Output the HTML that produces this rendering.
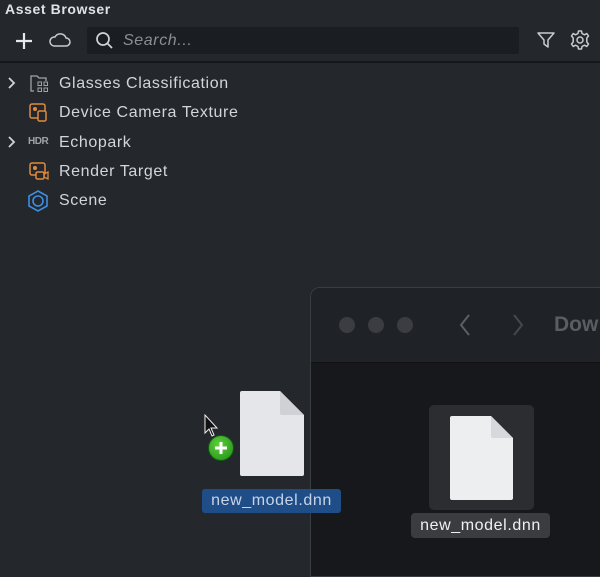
<!DOCTYPE html>
<html><head><style>
*{margin:0;padding:0;box-sizing:border-box}
body{width:600px;height:560px;background:#24282d;font-family:"Liberation Sans",sans-serif;position:relative;overflow:hidden;color:#d2d5da}
.a{position:absolute}
.row{position:absolute;left:59px;font-size:16px;color:#d2d5da;line-height:20px;letter-spacing:0.6px}
.chev{position:absolute;left:6px}
</style></head><body>
<div class="a" style="left:5px;top:1px;font-size:14px;font-weight:bold;color:#e0e2e6;letter-spacing:0.6px">Asset Browser</div>
<svg class="a" style="left:14px;top:31px" width="20" height="20"><path d="M10 2V18M2 10H18" stroke="#e6e8ec" stroke-width="2.2"/></svg>
<svg class="a" style="left:48px;top:31px" width="24" height="18"><path d="M6 15H18A4 4 0 0 0 18 7A6 6 0 0 0 7 6A4.5 4.5 0 0 0 6 15Z" fill="none" stroke="#c8cbd0" stroke-width="1.5"/></svg>
<div class="a" style="left:87px;top:27px;width:432px;height:27px;background:#1a1d21;border-radius:2px"></div>
<svg class="a" style="left:95px;top:31px" width="20" height="20"><circle cx="8" cy="8" r="6" fill="none" stroke="#d0d3d8" stroke-width="1.7"/><path d="M12.5 12.5L17 17" stroke="#d0d3d8" stroke-width="1.8"/></svg>
<div class="a" style="left:123px;top:32px;font-size:16px;font-style:italic;color:#8a8e95;letter-spacing:0.6px">Search...</div>
<svg class="a" style="left:536px;top:30px" width="20" height="20"><path d="M2 3H18L12 10V17L8 14V10Z" fill="none" stroke="#c8cbd0" stroke-width="1.5" stroke-linejoin="round"/></svg>
<svg class="a" style="left:569px;top:29px" width="22" height="22"><circle cx="11" cy="11" r="3" fill="none" stroke="#c8cbd0" stroke-width="1.5"/><path d="M9.5 2H12.5L13 4.5L15.5 5.8L17.8 4.5L19.5 7L17.8 9V13L19.5 15L17.8 17.5L15.5 16.2L13 17.5L12.5 20H9.5L9 17.5L6.5 16.2L4.2 17.5L2.5 15L4.2 13V9L2.5 7L4.2 4.5L6.5 5.8L9 4.5Z" fill="none" stroke="#c8cbd0" stroke-width="1.5" stroke-linejoin="round"/></svg>
<div class="a" style="left:0;top:61px;width:600px;height:2px;background:#15181b"></div>

<svg class="chev" style="top:76px" width="12" height="14"><path d="M3 2L8 7L3 12" fill="none" stroke="#d0d3d8" stroke-width="1.8"/></svg>
<svg class="a" style="left:28px;top:73px" width="22" height="20"><path d="M6 18H3V3H9L11 5H18V8" fill="none" stroke="#a0a4aa" stroke-width="1.3"/><rect x="10" y="9" width="3.5" height="3.5" fill="none" stroke="#a0a4aa"/><rect x="16" y="9" width="3.5" height="3.5" fill="none" stroke="#a0a4aa"/><rect x="10" y="15" width="3.5" height="3.5" fill="none" stroke="#a0a4aa"/><rect x="16" y="15" width="3.5" height="3.5" fill="none" stroke="#a0a4aa"/></svg>
<div class="row" style="top:74px">Glasses Classification</div>
<svg class="a" style="left:28px;top:102px" width="22" height="20"><rect x="2" y="2" width="15" height="14" rx="2" fill="none" stroke="#e08a3c" stroke-width="1.5"/><rect x="10" y="9" width="8" height="10" rx="1.5" fill="#24282d" stroke="#e08a3c" stroke-width="1.5"/><circle cx="7" cy="7" r="2" fill="#e08a3c"/></svg>
<div class="row" style="top:103px">Device Camera Texture</div>
<svg class="chev" style="top:135px" width="12" height="14"><path d="M3 2L8 7L3 12" fill="none" stroke="#d0d3d8" stroke-width="1.8"/></svg>
<div class="a" style="left:28px;top:136px;font-size:10px;font-weight:bold;color:#a0a4aa;letter-spacing:-0.5px">HDR</div>
<div class="row" style="top:133px">Echopark</div>
<svg class="a" style="left:28px;top:161px" width="22" height="20"><rect x="2" y="2" width="15" height="12" rx="2" fill="none" stroke="#e08a3c" stroke-width="1.5"/><rect x="8" y="11" width="8" height="7" rx="1.5" fill="#24282d" stroke="#e08a3c" stroke-width="1.5"/><path d="M16 13L20 11V18L16 16" fill="none" stroke="#e08a3c" stroke-width="1.3"/><circle cx="7" cy="7" r="2" fill="#e08a3c"/></svg>
<div class="row" style="top:162px">Render Target</div>
<svg class="a" style="left:27px;top:190px" width="22" height="22"><path d="M11 1L20 6V16L11 21L2 16V6Z" fill="none" stroke="#3c8ee0" stroke-width="1.6"/><circle cx="11" cy="11" r="5" fill="none" stroke="#3c8ee0" stroke-width="1.6"/></svg>
<div class="row" style="top:191px">Scene</div>

<div class="a" style="left:310px;top:287px;width:300px;height:290px;background:#16181b;border-radius:10px 0 0 0;border:1px solid #3a3d42;overflow:hidden">
 <div style="height:75px;background:#1f2226;border-bottom:1px solid #111"></div>
</div>
<div class="a" style="left:339px;top:317px;width:16px;height:16px;border-radius:50%;background:#3b3d41"></div>
<div class="a" style="left:368px;top:317px;width:16px;height:16px;border-radius:50%;background:#3b3d41"></div>
<div class="a" style="left:397px;top:317px;width:16px;height:16px;border-radius:50%;background:#3b3d41"></div>
<svg class="a" style="left:457px;top:312px" width="16" height="26"><path d="M12 3L4 13L12 23" fill="none" stroke="#5c5f64" stroke-width="2"/></svg>
<svg class="a" style="left:510px;top:312px" width="16" height="26"><path d="M4 3L12 13L4 23" fill="none" stroke="#45484c" stroke-width="2"/></svg>
<div class="a" style="left:554px;top:313px;font-size:21px;font-weight:bold;color:#5a5d62">Dow</div>

<div class="a" style="left:429px;top:405px;width:105px;height:105px;background:#2b2d31;border-radius:5px"></div>
<svg class="a" style="left:450px;top:416px" width="64" height="84"><path d="M2 0H41L63 22V82Q63 84 61 84H2Q0 84 0 82V2Q0 0 2 0Z" fill="#eceef0"/><path d="M41 0V20Q41 22 43 22H63Z" fill="#d6d8db"/></svg>
<div class="a" style="left:411px;top:513px;width:139px;height:25px;background:#3a3c40;border-radius:4px;font-size:16px;color:#f0f0f2;text-align:center;line-height:25px;letter-spacing:0.6px">new_model.dnn</div>

<svg class="a" style="left:240px;top:391px" width="64" height="85"><path d="M2 0H40L64 24V83Q64 85 62 85H2Q0 85 0 83V2Q0 0 2 0Z" fill="#e4e6e9"/><path d="M40 0V22Q40 24 42 24H64Z" fill="#cfd1d4"/></svg>
<div class="a" style="left:202px;top:489px;width:139px;height:24px;background:#1f4d88;border-radius:3px;font-size:16px;color:#c8d4e4;text-align:center;line-height:24px;letter-spacing:0.6px">new_model.dnn</div>
<svg class="a" style="left:204px;top:414px" width="16" height="24"><path d="M1 1V19L5 15L8 22L10 21L7 14H13Z" fill="#111" stroke="#eee" stroke-width="1"/></svg>
<div class="a" style="left:208px;top:435px;width:26px;height:26px;border-radius:50%;background:radial-gradient(circle at 40% 35%,#5fce3a,#1f8c18);border:1px solid #0d5a0d"></div>
<svg class="a" style="left:208px;top:435px" width="26" height="26"><path d="M13 7V19M7 13H19" stroke="#fff" stroke-width="3"/></svg>
</body></html>
